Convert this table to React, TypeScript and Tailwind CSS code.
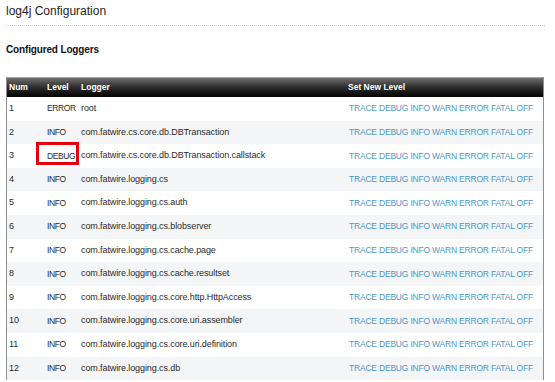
import React from "react";

const loggers: [string, string][] = [
  ["ERROR", "root"],
  ["INFO", "com.fatwire.cs.core.db.DBTransaction"],
  ["DEBUG", "com.fatwire.cs.core.db.DBTransaction.callstack"],
  ["INFO", "com.fatwire.logging.cs"],
  ["INFO", "com.fatwire.logging.cs.auth"],
  ["INFO", "com.fatwire.logging.cs.blobserver"],
  ["INFO", "com.fatwire.logging.cs.cache.page"],
  ["INFO", "com.fatwire.logging.cs.cache.resultset"],
  ["INFO", "com.fatwire.logging.cs.core.http.HttpAccess"],
  ["INFO", "com.fatwire.logging.cs.core.uri.assembler"],
  ["INFO", "com.fatwire.logging.cs.core.uri.definition"],
  ["INFO", "com.fatwire.logging.cs.db"],
];

const levels = ["TRACE", "DEBUG", "INFO", "WARN", "ERROR", "FATAL", "OFF"];

export default function App() {
  return (
    <div className="w-[555px] h-[382px] overflow-hidden bg-white text-[#2b2b2b] font-['Liberation_Sans',Arial,sans-serif]">
      {/* page title */}
      <div className="pl-[6px] pr-[10px] pt-[3px]">
        <h1 className="text-[12px] leading-[16px] text-[#1e1e1e]">log4j Configuration</h1>
        <div className="mt-[6px] border-t border-dotted border-[#c8c8c8]" />
        <h2 className="mt-[17px] text-[10px] leading-[14px] font-bold tracking-[-0.15px] text-[#111]">
          Configured Loggers
        </h2>
      </div>

      {/* loggers table */}
      <div className="mt-[20px] ml-[6px] w-[538px] border-x border-[#8f8f8f]">
        <div className="flex h-[20px] items-center bg-gradient-to-b from-[#707070] via-[#2c2c2c] to-[#050505] border-t border-[#a8a8a8] text-[8.5px] font-bold text-white">
          <div className="w-[38px] pl-[2px]">Num</div>
          <div className="w-[34px] pl-[2px]">Level</div>
          <div className="w-[267px] pl-[2px]">Logger</div>
          <div className="pl-[2px]">Set New Level</div>
        </div>
        {loggers.map(([level, name], i) => (
          <div
            key={name}
            className={`flex h-[23.6px] items-center text-[#2b2b2b] ${i % 2 === 1 ? "bg-[#f3f5f7]" : "bg-white"}`}
          >
            <div className="w-[38px] pl-[2px] text-[9px]">{i + 1}</div>
            <div className="relative w-[34px] pl-[2px] text-[8.5px] tracking-[-0.4px] text-[#2b2b2b]">
              {level}
              {level === "DEBUG" && (
                <span className="absolute left-[-9px] top-[-8px] h-[23px] w-[43px] border-[3px] border-[#e6000a]" />
              )}
            </div>
            <div className="w-[267px] pl-[2px] text-[9px] tracking-[-0.1px]">{name}</div>
            <div className="pl-[3px] text-[8.5px] tracking-[-0.2px] text-[#4e97c7]">
              {levels.map((l, j) => (
                <React.Fragment key={l}>
                  <span className="cursor-pointer">{l}</span>
                  {j < levels.length - 1 && " "}
                </React.Fragment>
              ))}
            </div>
          </div>
        ))}
      </div>
    </div>
  );
}
